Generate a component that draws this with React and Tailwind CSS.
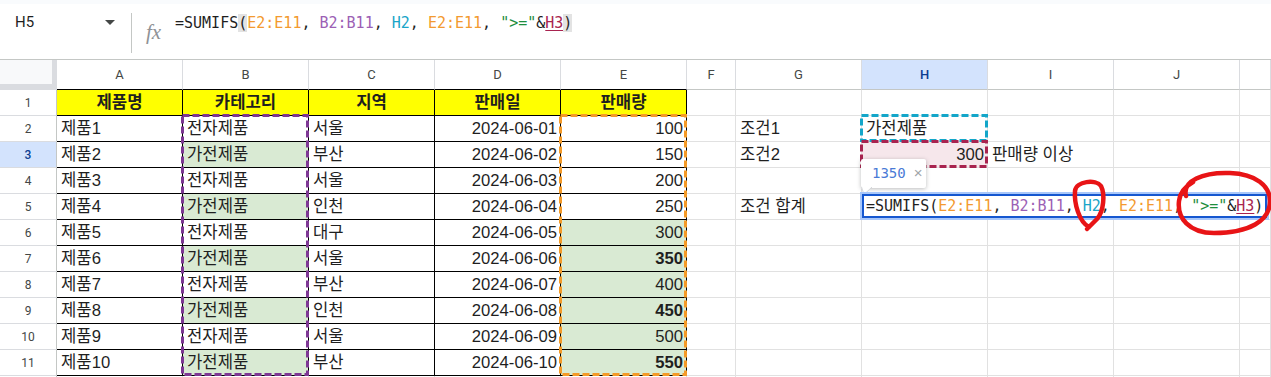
import React from 'react'

const SANS = "font-['Liberation_Sans','Noto_Sans_CJK_KR',sans-serif]"
const MONO = "font-['DejaVu_Sans_Mono','Liberation_Mono',monospace]"

const COLS = ['col-start-1', 'col-start-2', 'col-start-3', 'col-start-4', 'col-start-5', 'col-start-6', 'col-start-7', 'col-start-8', 'col-start-9', 'col-start-10', 'col-start-11', 'col-start-12']
const ROWS = ['row-start-1', 'row-start-2', 'row-start-3', 'row-start-4', 'row-start-5', 'row-start-6', 'row-start-7', 'row-start-8', 'row-start-9', 'row-start-10', 'row-start-11', 'row-start-12', 'row-start-13']

const LETTERS = ['A', 'B', 'C', 'D', 'E', 'F', 'G', 'H', 'I', 'J', '']

const data = [
  ['제품1', '전자제품', '서울', '2024-06-01', 100],
  ['제품2', '가전제품', '부산', '2024-06-02', 150],
  ['제품3', '전자제품', '서울', '2024-06-03', 200],
  ['제품4', '가전제품', '인천', '2024-06-04', 250],
  ['제품5', '전자제품', '대구', '2024-06-05', 300],
  ['제품6', '가전제품', '서울', '2024-06-06', 350],
  ['제품7', '전자제품', '부산', '2024-06-07', 400],
  ['제품8', '가전제품', '인천', '2024-06-08', 450],
  ['제품9', '전자제품', '서울', '2024-06-09', 500],
  ['제품10', '가전제품', '부산', '2024-06-10', 550]
]

// one sheet row -> 11 cells (A..K)
function buildRow(r) {
  const cells = Array.from({ length: 11 }, () => ({ text: '', align: 'left', bold: false, bg: '' }))
  if (r === 1) {
    ;['제품명', '카테고리', '지역', '판매일', '판매량'].forEach((t, i) => {
      cells[i] = { text: t, align: 'center', bold: true, bg: 'bg-[#ffff00]' }
    })
  } else if (r <= 11) {
    const [name, cat, region, date, qty] = data[r - 2]
    const home = cat === '가전제품'
    cells[0] = { ...cells[0], text: name }
    cells[1] = { ...cells[1], text: cat, bg: home ? 'bg-[#d9ead3]' : '' }
    cells[2] = { ...cells[2], text: region }
    cells[3] = { ...cells[3], text: date, align: 'right' }
    cells[4] = { text: String(qty), align: 'right', bold: home && qty >= 300, bg: qty >= 300 ? 'bg-[#d9ead3]' : '' }
  }
  if (r === 2) {
    cells[6].text = '조건1'
    cells[7].text = '가전제품'
  }
  if (r === 3) {
    cells[6].text = '조건2'
    cells[7] = { text: '300', align: 'right', bold: false, bg: 'bg-[#f6e7eb]' }
    cells[8].text = '판매량 이상'
  }
  if (r === 5) cells[6].text = '조건 합계'
  return cells
}

function Formula({ bar }) {
  return (
    <>
      =SUMIFS<span className={bar ? 'bg-[#e3e3e3]' : ''}>(</span>
      <span className="text-[#f39a2f]">E2:E11</span>, <span className="text-[#9c5fb5]">B2:B11</span>, <span className="text-[#1aa5c8]">H2</span>, <span className="text-[#f39a2f]">E2:E11</span>, <span className="text-[#1e8e3e]">"&gt;="</span>&amp;<span className="text-[#a8234f] underline underline-offset-2">H3</span>
      <span className={bar ? 'bg-[#e3e3e3]' : ''}>)</span>
    </>
  )
}

function RangeBox({ className, color }) {
  return (
    <div className={`${className} pointer-events-none -ml-[2px] -mt-[2px]`}>
      <svg className="h-full w-full">
        <rect x="1.5" y="1.5" className="h-[calc(100%-3px)] w-[calc(100%-3px)]" fill="none" stroke={color} strokeWidth="3" strokeDasharray="7 3" />
      </svg>
    </div>
  )
}

export default function App() {
  const sheetRows = Array.from({ length: 12 }, (_, i) => i + 1)

  return (
    <div className={`relative h-[377px] w-[1271px] overflow-hidden bg-white text-[#1f1f1f] ${SANS}`}>
      <div className="h-[4px] bg-[#f9fbfd]" />

      {/* formula bar */}
      <div className="flex h-[56px] items-start border-b border-[#c4c7c5]">
        <div className="flex h-[37px] w-[131px] items-center pl-[15px] font-['Roboto',sans-serif] text-[15px]">
          <span>H5</span>
          <svg className="ml-auto mr-[16px]" width="10" height="5" viewBox="0 0 10 5">
            <path d="M0 0h10L5 5z" fill="#444746" />
          </svg>
        </div>
        <div className="mt-[9px] h-[40px] w-px bg-[#c4c7c5]" />
        <span className="ml-[14px] mt-[16px] w-[18px] font-['Liberation_Serif',serif] text-[21px] italic leading-[24px] text-[#8f9296]">fx</span>
        <div className={`ml-[11px] mt-[9px] whitespace-pre text-[15px] leading-[20px] ${MONO}`}>
          <Formula bar />
        </div>
      </div>

      {/* sheet */}
      <div className="relative grid grid-cols-[57px_126px_126px_126px_126px_126px_49px_126px_126px_126px_126px_1fr] grid-rows-[30px_repeat(12,26px)] text-[16.67px]">
        {/* corner */}
        <div className="col-start-1 row-start-1 border-b-[6px] border-r-[5px] border-[#dadce0] bg-[#f8f9fa]" />
        {LETTERS.map((l, i) => (
          <div
            key={'h' + i}
            className={`${COLS[i + 1]} row-start-1 flex items-center justify-center border-b border-r font-['Roboto',sans-serif] text-[13px] ${i <= 4 ? 'border-b-black' : 'border-b-[#c4c7c5]'} border-r-[#dadce0] ${i === 7 ? 'bg-[#d3e3fd] font-medium text-[#0b3d91]' : 'text-[#444746]'}`}
          >
            {l}
          </div>
        ))}

        {sheetRows.map((r) => (
          <React.Fragment key={r}>
            <div
              className={`col-start-1 ${ROWS[r]} flex items-center justify-center border-b border-r border-b-[#dadce0] border-r-[#c4c7c5] font-['Roboto',sans-serif] text-[12px] ${r === 3 ? 'bg-[#d3e3fd] font-medium text-[#0b3d91]' : 'text-[#444746]'}`}
            >
              {r <= 11 ? r : ''}
            </div>
            {buildRow(r).map((c, i) => {
              const table = r <= 11 && i <= 4
              return (
                <div
                  key={i}
                  className={`${COLS[i + 1]} ${ROWS[r]} flex items-center overflow-visible whitespace-nowrap border-b border-r leading-[25px] ${table ? 'border-black' : 'border-[#e1e1e1]'} ${c.align === 'right' ? 'justify-end pr-[3px]' : c.align === 'center' ? 'justify-center' : 'pl-[4px]'} ${c.bold ? 'font-bold' : ''} ${c.bg}`}
                >
                  {c.text}
                </div>
              )
            })}
          </React.Fragment>
        ))}

        {/* referenced ranges */}
        <RangeBox className="col-start-3 row-start-3 row-end-13" color="#7e3794" />
        <RangeBox className="col-start-6 row-start-3 row-end-13" color="#f49a27" />
        <RangeBox className="col-start-9 row-start-3" color="#13a6c9" />
        <RangeBox className="col-start-9 row-start-4" color="#a8234f" />

        {/* result tooltip */}
        <div className="absolute left-[861px] top-[99px] flex h-[29px] w-[65px] items-center rounded-[2px] bg-white pl-[11px] shadow-[0_1px_4px_rgba(60,64,67,0.35)]">
          <span className={`text-[14px] text-[#4a7ad6] ${MONO}`}>1350</span>
          <span className="ml-[8px] text-[15px] text-[#a0a4a8]">×</span>
          <svg className="absolute left-0 top-[28px]" width="12" height="8" viewBox="0 0 12 8">
            <path d="M0 0h11L3 7.5z" fill="#fff" />
            <path d="M11 0L3 7.5L0.5 0" fill="none" stroke="#d5d7da" strokeWidth="1" />
          </svg>
        </div>

        {/* cell editor on H5 */}
        <div className="absolute left-[860px] top-[132px] h-[28px] w-[409px] border-2 border-[#a8c7fa] bg-white">
          <div className={`flex h-full items-center whitespace-pre border-2 border-[#1557d0] pl-[2px] text-[15px] ${MONO}`}>
            <Formula />
          </div>
        </div>
      </div>

      {/* hand-drawn red marks */}
      <svg className="pointer-events-none absolute left-0 top-0" width="1271" height="377" viewBox="0 0 1271 377">
        <g fill="none" stroke="#e81416" strokeWidth="4.5" strokeLinecap="round" strokeLinejoin="round">
          <path d="M1089 227 C1079 222 1074 203 1075 191 C1076 181 1096 179 1101 186 C1105 194 1104 211 1097 219 C1093 223 1090 226 1087 229" />
          <path d="M1186 196 C1182 181 1203 172 1230 173 C1256 174 1270 186 1270 201 C1270 221 1249 233 1214 233 C1189 233 1177 218 1179 201 C1180 192 1186 186 1193 182" />
        </g>
      </svg>
    </div>
  )
}
